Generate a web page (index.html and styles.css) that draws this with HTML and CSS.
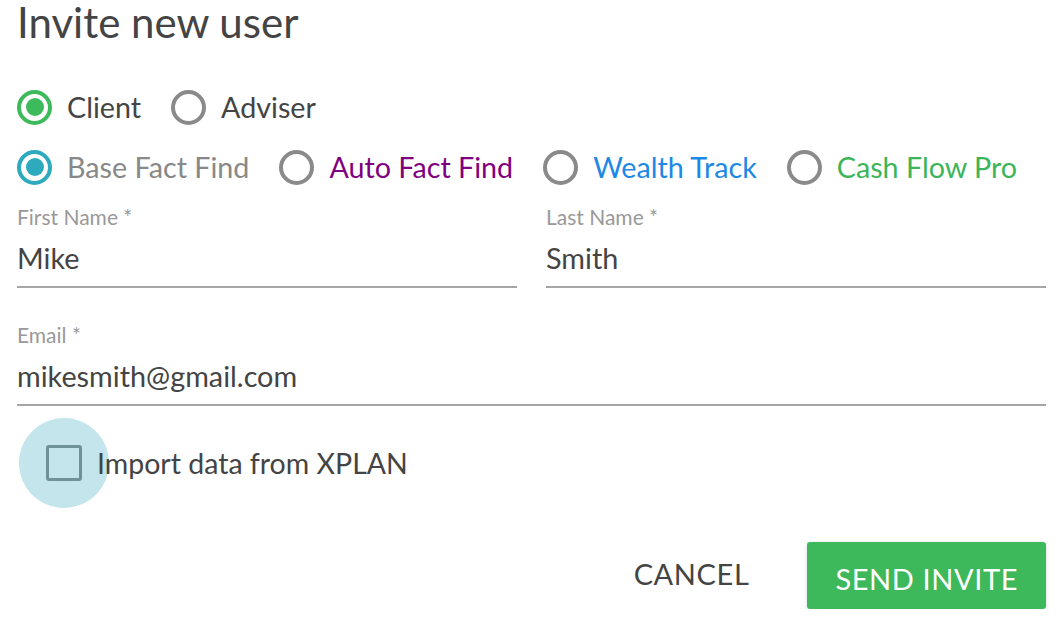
FILE: index.html
```html
<!DOCTYPE html>
<html lang="en">
<head>
    <meta charset="UTF-8">
    <meta name="viewport" content="width=device-width, initial-scale=1.0">
    <title>Invite new user</title>
    <link rel="stylesheet" href="styles.css">
</head>
<body>
    <div class="dialog">
        <h2>Invite new user</h2>

        <div class="radio-row">
            <label class="option">
                <span class="radio green checked"></span>
                <span class="option-text">Client</span>
            </label>
            <label class="option">
                <span class="radio"></span>
                <span class="option-text">Adviser</span>
            </label>
        </div>

        <div class="radio-row">
            <label class="option">
                <span class="radio teal checked"></span>
                <span class="option-text muted">Base Fact Find</span>
            </label>
            <label class="option">
                <span class="radio"></span>
                <span class="option-text purple">Auto Fact Find</span>
            </label>
            <label class="option">
                <span class="radio"></span>
                <span class="option-text blue">Wealth Track</span>
            </label>
            <label class="option">
                <span class="radio"></span>
                <span class="option-text lime">Cash Flow Pro</span>
            </label>
        </div>

        <div class="field-row">
            <div class="field">
                <label for="firstName">First Name *</label>
                <input type="text" id="firstName" value="Mike">
            </div>
            <div class="field">
                <label for="lastName">Last Name *</label>
                <input type="text" id="lastName" value="Smith">
            </div>
        </div>

        <div class="field">
            <label for="email">Email *</label>
            <input type="text" id="email" value="mikesmith@gmail.com">
        </div>

        <label class="check-row">
            <span class="checkbox"></span>
            <span class="check-text">Import data from XPLAN</span>
        </label>

        <div class="actions">
            <button class="btn-text">Cancel</button>
            <button class="btn-send">Send Invite</button>
        </div>
    </div>
</body>
</html>
```

FILE: styles.css
```css
body {
    margin: 0;
    background: #fff;
    font-family: Lato, "Liberation Sans", sans-serif;
    color: #444;
}
.dialog {
    padding: 0 17px;
}
h2 {
    margin: 0;
    padding-top: 1px;
    font-size: 42px;
    font-weight: 400;
    line-height: 42px;
    color: #444;
}
.radio-row {
    display: flex;
    align-items: center;
    gap: 30px;
    height: 60px;
}
.radio-row:first-of-type {
    margin-top: 34px;
}
.option {
    display: flex;
    align-items: center;
    gap: 15px;
}
.option-text {
    font-size: 28.7px;
    line-height: 36px;
}
.radio {
    position: relative;
    box-sizing: border-box;
    width: 35px;
    height: 35px;
    border: 4px solid #8a8a8a;
    border-radius: 50%;
}
.radio.checked::after {
    content: "";
    position: absolute;
    top: 4.5px;
    left: 4.5px;
    width: 18px;
    height: 18px;
    border-radius: 50%;
    background: currentColor;
}
.radio.green {
    border-color: #3dba5b;
    color: #3dba5b;
}
.radio.teal {
    border-color: #2eaabf;
    color: #2eaabf;
}
.muted {
    color: #888;
}
.purple {
    color: #800080;
}
.blue {
    color: #1e88e5;
}
.lime {
    color: #3cb55a;
}
.field-row {
    display: grid;
    grid-template-columns: 1fr 1fr;
    gap: 29px;
    margin-top: 8px;
}
.field {
    display: flex;
    flex-direction: column;
}
.field-row + .field {
    margin-top: 35px;
}
.field label {
    font-size: 21px;
    line-height: 24px;
    color: #999;
    margin-bottom: 11px;
}
.field input {
    font-family: inherit;
    font-size: 28.8px;
    line-height: 36px;
    height: 36px;
    color: #444;
    border: none;
    border-bottom: 2px solid #a6a6a6;
    padding: 0 0 10px;
    margin: 0;
    box-sizing: content-box;
    outline: none;
    background: none;
}
.check-row {
    display: flex;
    align-items: center;
    height: 90px;
    margin-top: 12px;
}
.checkbox {
    position: relative;
    box-sizing: border-box;
    width: 36px;
    height: 36px;
    margin-left: 29px;
    border: 3px solid #6f9298;
    border-radius: 3px;
}
.checkbox::before {
    content: "";
    position: absolute;
    left: -30px;
    top: -30px;
    width: 90px;
    height: 90px;
    border-radius: 50%;
    background: #c3e5eb;
    z-index: -1;
}
.check-text {
    position: relative;
    margin-left: 15px;
    font-size: 28.5px;
    line-height: 36px;
}
.actions {
    display: flex;
    justify-content: flex-end;
    align-items: flex-start;
    gap: 30px;
    margin-top: 34px;
}
button {
    font-family: inherit;
    font-size: 29px;
    letter-spacing: 0.6px;
    text-transform: uppercase;
    border: none;
    cursor: pointer;
    height: 67px;
    padding: 0 28px;
    border-radius: 3px;
    box-sizing: border-box;
}
.btn-text {
    background: none;
    color: #444;
    height: 63px;
}
.btn-send {
    background: #3db85a;
    color: #fff;
    padding-top: 6px;
    box-shadow: 0 1px 4px rgba(0, 0, 0, 0.15);
}
```
